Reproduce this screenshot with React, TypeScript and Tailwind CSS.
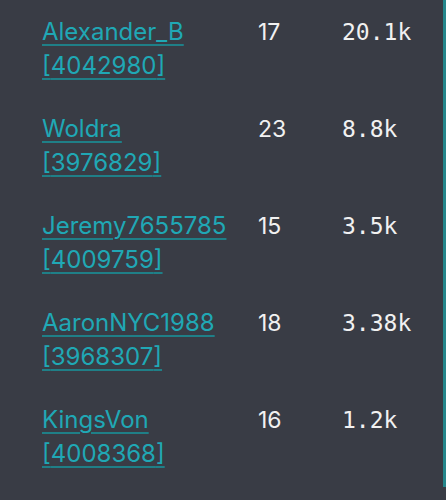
const rows = [
  { name: "Alexander_B", id: "4042980", count: "17", total: "20.1k" },
  { name: "Woldra", id: "3976829", count: "23", total: "8.8k" },
  { name: "Jeremy7655785", id: "4009759", count: "15", total: "3.5k" },
  { name: "AaronNYC1988", id: "3968307", count: "18", total: "3.38k" },
  { name: "KingsVon", id: "4008368", count: "16", total: "1.2k" },
];

export default function App() {
  return (
    <div className="w-[446px] h-[500px] bg-[#393c45] overflow-hidden">
      <div className="h-[487px] border-r-[3px] border-[#25868b]">
        {rows.map((r) => (
          <div key={r.id} className="flex h-[97px] pt-[15px] pl-[42px] text-[23px] leading-[34px]">
            <div className="w-[216px] font-['Inter',sans-serif] text-[24px] text-[#20a8b5]">
              <a className="underline decoration-[#1f7f87] decoration-[2px] underline-offset-[4px]">{r.name}</a>
              <br />
              <a className="underline decoration-[#1f7f87] decoration-[2px] underline-offset-[4px]">[{r.id}]</a>
            </div>
            <div className="w-[84px] font-['Inter',sans-serif] text-[#f1f1f1]">{r.count}</div>
            <div className="font-['DejaVu_Sans_Mono',monospace] text-[#f1f1f1]">{r.total}</div>
          </div>
        ))}
      </div>
    </div>
  );
}
